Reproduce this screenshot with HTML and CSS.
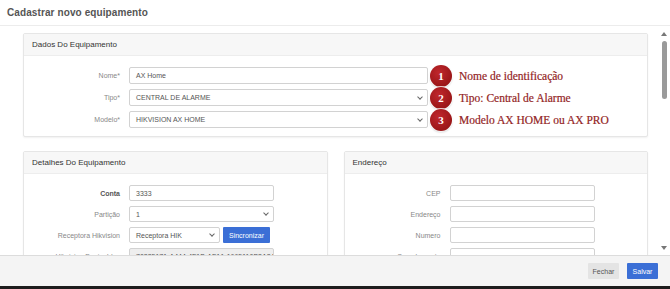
FILE: index.html
```html
<!DOCTYPE html>
<html lang="pt-BR">
<head>
    <meta charset="UTF-8">
    <title>Cadastrar novo equipamento</title>
    <link rel="stylesheet" href="styles.css">
</head>
<body>
    <div class="modal">
        <div class="modal-header">
            <h1>Cadastrar novo equipamento</h1>
        </div>

        <div class="modal-body">
            <div class="content">
                <section class="card">
                    <div class="card-header">Dados Do Equipamento</div>
                    <div class="card-body tall">
                        <div class="row">
                            <span class="label">Nome*</span>
                            <div class="field wide">AX Home</div>
                            <div class="note"><span class="num">1</span>Nome de identificação</div>
                        </div>
                        <div class="row">
                            <span class="label">Tipo*</span>
                            <div class="field wide select">CENTRAL DE ALARME</div>
                            <div class="note"><span class="num">2</span>Tipo: Central de Alarme</div>
                        </div>
                        <div class="row">
                            <span class="label">Modelo*</span>
                            <div class="field wide select">HIKVISION AX HOME</div>
                            <div class="note"><span class="num">3</span>Modelo AX HOME ou AX PRO</div>
                        </div>
                    </div>
                </section>

                <div class="columns">
                    <section class="card">
                        <div class="card-header">Detalhes Do Equipamento</div>
                        <div class="card-body">
                            <div class="row">
                                <span class="label strong">Conta</span>
                                <div class="field">3333</div>
                            </div>
                            <div class="row">
                                <span class="label">Partição</span>
                                <div class="field select">1</div>
                            </div>
                            <div class="row">
                                <span class="label">Receptora Hikvision</span>
                                <div class="field select short">Receptora HIK</div>
                                <button class="btn primary sync">Sincronizar</button>
                            </div>
                            <div class="row">
                                <span class="label">Hikvision DeviceIdex</span>
                                <div class="field disabled">70285171-A444-4F1B-AFA1-1665110B3A84</div>
                            </div>
                        </div>
                    </section>

                    <section class="card">
                        <div class="card-header">Endereço</div>
                        <div class="card-body">
                            <div class="row">
                                <span class="label">CEP</span>
                                <div class="field"></div>
                            </div>
                            <div class="row">
                                <span class="label">Endereço</span>
                                <div class="field"></div>
                            </div>
                            <div class="row">
                                <span class="label">Numero</span>
                                <div class="field"></div>
                            </div>
                            <div class="row">
                                <span class="label">Complemento</span>
                                <div class="field"></div>
                            </div>
                        </div>
                    </section>
                </div>
            </div>

            <div class="scrollbar">
                <span class="arrow up"></span>
                <span class="thumb"></span>
                <span class="arrow down"></span>
            </div>
        </div>

        <div class="modal-footer">
            <button class="btn">Fechar</button>
            <button class="btn primary">Salvar</button>
        </div>
    </div>
</body>
</html>
```

FILE: styles.css
```css
body {
    margin: 0;
    font-family: "Liberation Sans", Arial, sans-serif;
    background: #fff;
    color: #555;
}
.modal {
    width: 670px;
    height: 289px;
    display: flex;
    flex-direction: column;
    overflow: hidden;
    border-bottom: 3px solid #1d1d1d;
    box-sizing: border-box;
}
.modal-header {
    height: 25px;
    border-bottom: 1px solid #ececec;
    display: flex;
    align-items: center;
    padding-left: 7px;
    flex-shrink: 0;
}
.modal-header h1 {
    margin: 0;
    font-size: 10px;
    font-weight: bold;
    color: #555;
    letter-spacing: 0.1px;
}
.modal-body {
    flex: 1;
    display: flex;
    overflow: hidden;
    min-height: 0;
}
.content {
    flex: 1;
    padding: 7px 10px 0 23px;
}
.card {
    border: 1px solid #e6e6e6;
    border-radius: 2px;
    box-shadow: 0 1px 2px rgba(0,0,0,0.06);
    background: #fff;
}
.card-header {
    height: 21px;
    background: #f7f7f7;
    border-bottom: 1px solid #ededed;
    padding-left: 8px;
    display: flex;
    align-items: center;
    font-size: 8px;
    color: #333;
}
.card-body {
    padding: 11px 0 8px;
    display: flex;
    flex-direction: column;
    gap: 5px;
}
.card-body.tall .row {
    height: 17px;
}
.columns {
    display: flex;
    gap: 16px;
    margin-top: 14px;
}
.columns .card {
    flex: 1;
}
.row {
    height: 16px;
    display: flex;
    align-items: center;
}
.label {
    width: 96px;
    text-align: right;
    font-size: 7px;
    color: #888;
    margin-right: 9px;
    flex-shrink: 0;
}
.label.strong {
    font-weight: bold;
    color: #555;
}
.field {
    position: relative;
    width: 145px;
    height: 100%;
    box-sizing: border-box;
    border: 1px solid #d2d2d2;
    border-radius: 2px;
    padding-left: 6px;
    display: flex;
    align-items: center;
    font-size: 7px;
    color: #555;
    background: #fff;
    white-space: nowrap;
    overflow: hidden;
}
.field.wide {
    width: 299px;
}
.field.short {
    width: 91px;
}
.field.disabled {
    background: #eee;
}
.field.select::after {
    content: "";
    position: absolute;
    right: 5px;
    top: 50%;
    width: 3px;
    height: 3px;
    margin-top: -3px;
    border-right: 1px solid #666;
    border-bottom: 1px solid #666;
    transform: rotate(45deg);
}
.note {
    display: flex;
    align-items: center;
    margin-left: 2px;
    font-family: "Liberation Serif", "Times New Roman", serif;
    font-size: 11.5px;
    color: #932424;
    white-space: nowrap;
    -webkit-text-stroke: 0.2px #932424;
}
.num {
    width: 22px;
    height: 22px;
    border-radius: 50%;
    background: radial-gradient(circle at 40% 35%, #c0272d, #9b1618 70%);
    box-shadow: 0 0 0 1px rgba(255,255,255,0.8), 0 1px 2px rgba(0,0,0,0.3);
    color: #fff;
    -webkit-text-stroke: 0;
    font-size: 11px;
    font-weight: bold;
    display: flex;
    align-items: center;
    justify-content: center;
    margin-right: 7px;
    flex-shrink: 0;
}
.btn {
    height: 16px;
    padding: 0 7px;
    border: none;
    border-radius: 1px;
    background: #e4e4e4;
    color: #555;
    font-family: "Liberation Sans", Arial, sans-serif;
    font-size: 7px;
}
.btn.primary {
    background: #3b6fd6;
    color: #fff;
}
.btn.sync {
    height: 100%;
    margin-left: 3px;
    padding: 0 6px;
}
.scrollbar {
    width: 12px;
    display: flex;
    flex-direction: column;
    align-items: center;
    padding: 6px 0 5px;
    box-sizing: border-box;
}
.arrow {
    width: 0;
    height: 0;
    border-left: 3px solid transparent;
    border-right: 3px solid transparent;
}
.arrow.up {
    border-bottom: 4px solid #777;
}
.arrow.down {
    border-top: 4px solid #777;
    margin-top: auto;
}
.thumb {
    width: 5px;
    height: 58px;
    margin-top: 5px;
    border-radius: 3px;
    background: #9a9a9a;
}
.modal-footer {
    height: 30px;
    flex-shrink: 0;
    border-top: 1px solid #dcdcdc;
    background: #f4f4f4;
    display: flex;
    align-items: center;
    justify-content: flex-end;
    gap: 8px;
    padding-right: 12px;
}
.modal-footer .btn {
    width: 31px;
    padding: 0;
}
```
